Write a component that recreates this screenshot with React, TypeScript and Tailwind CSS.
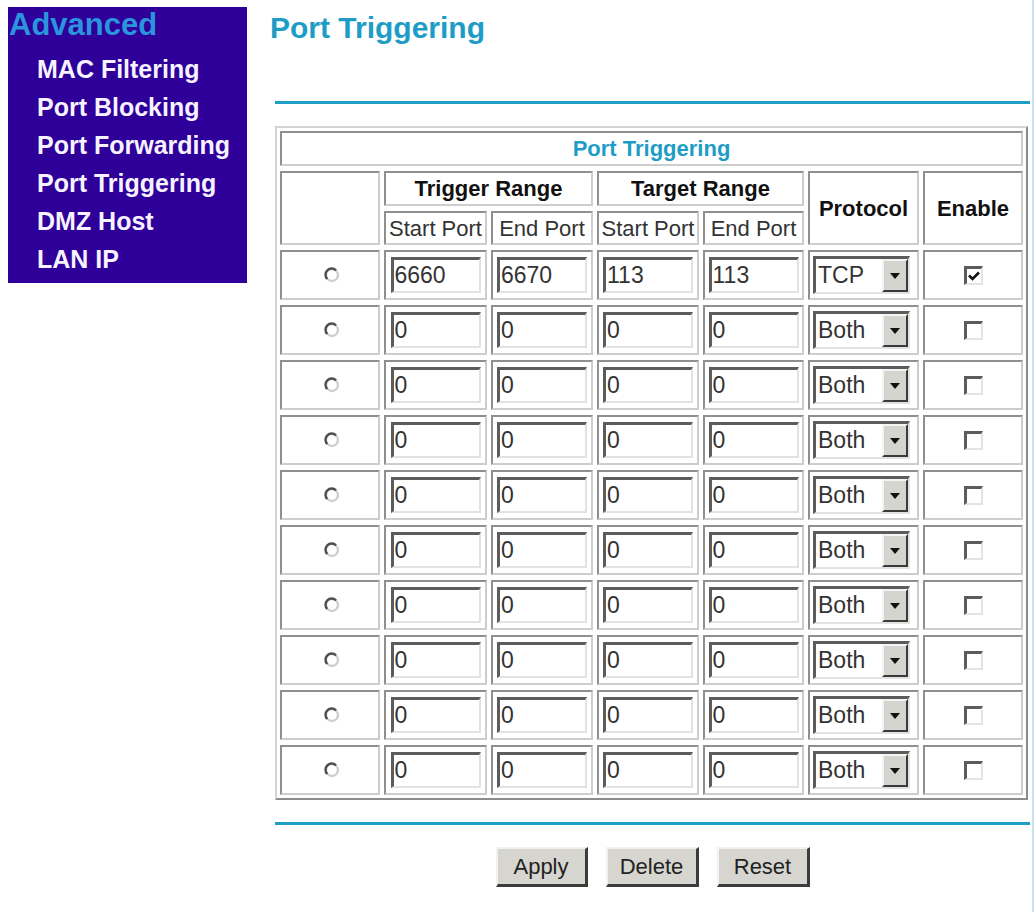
import React from "react";

type Row = { s1: string; e1: string; s2: string; e2: string; proto: string; en: boolean };

const rows: Row[] = [
  { s1: "6660", e1: "6670", s2: "113", e2: "113", proto: "TCP", en: true },
  ...Array.from({ length: 9 }, () => ({ s1: "0", e1: "0", s2: "0", e2: "0", proto: "Both", en: false })),
];

const cell =
  "border-2 border-t-[#8f8f8f] border-l-[#8f8f8f] border-r-[#cdcdcd] border-b-[#cdcdcd] bg-white flex items-center justify-center";

function Radio() {
  return (
    <svg width="16" height="16" viewBox="0 0 16 16" className="ml-[4px]">
      <circle cx="8" cy="8" r="6" fill="white" stroke="#cfcfcf" strokeWidth="2.4" />
      <path d="M3.3 12 A6 6 0 0 1 12 3.3" fill="none" stroke="#4e4e4e" strokeWidth="2.4" />
    </svg>
  );
}

function Field({ value }: { value: string }) {
  return (
    <input
      readOnly
      value={value}
      className="w-[90px] h-[36px] border-t-[3px] border-l-[3px] border-t-[#5c5c5c] border-l-[#5c5c5c] border-r-2 border-b-2 border-r-[#e2e2e2] border-b-[#e2e2e2] bg-white text-[23px] text-[#333] px-[1px] outline-none font-['Liberation_Sans',Arial,sans-serif]"
    />
  );
}

function Select({ value }: { value: string }) {
  return (
    <div className="w-[97px] h-[38px] flex border-t-[3px] border-l-[3px] border-t-[#5c5c5c] border-l-[#5c5c5c] border-r-2 border-b-2 border-r-[#e2e2e2] border-b-[#e2e2e2] bg-white">
      <span className="flex-1 text-[23px] leading-[33px] pl-[2px] text-[#333]">{value}</span>
      <span className="w-[26px] h-full bg-[#d6d4ce] border-t-2 border-l-2 border-t-[#f4f4f4] border-l-[#f4f4f4] border-r-2 border-b-2 border-r-[#3a3a3a] border-b-[#3a3a3a] flex items-center justify-center">
        <svg width="10" height="6" viewBox="0 0 10 6">
          <path d="M0 0 H10 L5 6 Z" fill="#111" />
        </svg>
      </span>
    </div>
  );
}

function Check({ on }: { on: boolean }) {
  return (
    <span className="w-[19px] h-[19px] border-t-[3px] border-l-[3px] border-t-[#5c5c5c] border-l-[#5c5c5c] border-r-2 border-b-2 border-r-[#e4e4e4] border-b-[#e4e4e4] bg-white flex items-center justify-center">
      {on && (
        <svg width="12" height="10" viewBox="0 0 12 10">
          <path d="M1 4.5 L4.5 8 L11 1.5" fill="none" stroke="#111" strokeWidth="2.6" />
        </svg>
      )}
    </span>
  );
}

function Btn({ label, w }: { label: string; w: string }) {
  return (
    <button
      className={`${w} h-[40px] bg-[#d6d5d0] border-t-2 border-l-2 border-t-[#f2f2f2] border-l-[#f2f2f2] border-r-[3px] border-b-[3px] border-r-[#3c3c3c] border-b-[#3c3c3c] text-[22px] text-[#222] font-['Liberation_Sans',Arial,sans-serif]`}
    >
      {label}
    </button>
  );
}

export default function App() {
  const menu = ["MAC Filtering", "Port Blocking", "Port Forwarding", "Port Triggering", "DMZ Host", "LAN IP"];
  return (
    <div className="w-[1034px] h-[912px] bg-white flex font-['Liberation_Sans',Arial,sans-serif] border-r-2 border-r-[#c4e4f0]">
      <aside className="ml-[8px] mt-[7px] w-[239px] h-[276px] bg-[#2e0099] shrink-0">
        <div className="pl-[1px] text-[31px] leading-[36px] font-bold text-[#2a94dc]">Advanced</div>
        <ul className="mt-[7px] pl-[29px]">
          {menu.map((m) => (
            <li key={m} className="h-[38px] text-[25px] leading-[38px] font-bold text-[#f6f2ff]">
              {m}
            </li>
          ))}
        </ul>
      </aside>

      <main className="ml-[23px] flex flex-col">
        <h1 className="mt-[11px] text-[30px] leading-[34px] font-bold text-[#1d9dc6]">Port Triggering</h1>
        <div className="ml-[5px] mt-[56px] w-[755px] h-[3px] bg-[#1f9ec6]" />

        <div className="ml-[5px] mt-[22px] w-[753px] border-2 border-t-[#d4d4d4] border-l-[#d4d4d4] border-r-[#8c8c8c] border-b-[#8c8c8c] p-[3px] bg-white">
          <div className="grid grid-cols-[100px_103px_102px_102px_101px_111px_100px] grid-rows-[35px_35px_34px_repeat(10,50px)] gap-x-[4px] gap-y-[5px]">
            <div className={`${cell} col-span-7 text-[22px] font-bold text-[#1d9dc6]`}>Port Triggering</div>

            <div className={`${cell} row-span-2`} />
            <div className={`${cell} col-span-2 text-[22px] font-bold text-[#111]`}>Trigger Range</div>
            <div className={`${cell} col-span-2 text-[22px] font-bold text-[#111]`}>Target Range</div>
            <div className={`${cell} row-span-2 text-[22px] font-bold text-[#111]`}>Protocol</div>
            <div className={`${cell} row-span-2 text-[22px] font-bold text-[#111]`}>Enable</div>

            <div className={`${cell} text-[22px] text-[#333] whitespace-nowrap`}>Start Port</div>
            <div className={`${cell} text-[22px] text-[#333] whitespace-nowrap`}>End Port</div>
            <div className={`${cell} text-[22px] text-[#333] whitespace-nowrap`}>Start Port</div>
            <div className={`${cell} text-[22px] text-[#333] whitespace-nowrap`}>End Port</div>

            {rows.map((r, i) => (
              <React.Fragment key={i}>
                <div className={cell}>
                  <Radio />
                </div>
                <div className={cell}>
                  <Field value={r.s1} />
                </div>
                <div className={cell}>
                  <Field value={r.e1} />
                </div>
                <div className={cell}>
                  <Field value={r.s2} />
                </div>
                <div className={cell}>
                  <Field value={r.e2} />
                </div>
                <div className={`${cell} !justify-start pl-[3px]`}>
                  <Select value={r.proto} />
                </div>
                <div className={cell}>
                  <Check on={r.en} />
                </div>
              </React.Fragment>
            ))}
          </div>
        </div>

        <div className="ml-[5px] mt-[22px] w-[755px] h-[3px] bg-[#1f9ec6]" />

        <div className="ml-[5px] mt-[22px] w-[755px] flex justify-center gap-[18px]">
          <Btn label="Apply" w="w-[92px]" />
          <Btn label="Delete" w="w-[93px]" />
          <Btn label="Reset" w="w-[93px]" />
        </div>
      </main>
    </div>
  );
}
